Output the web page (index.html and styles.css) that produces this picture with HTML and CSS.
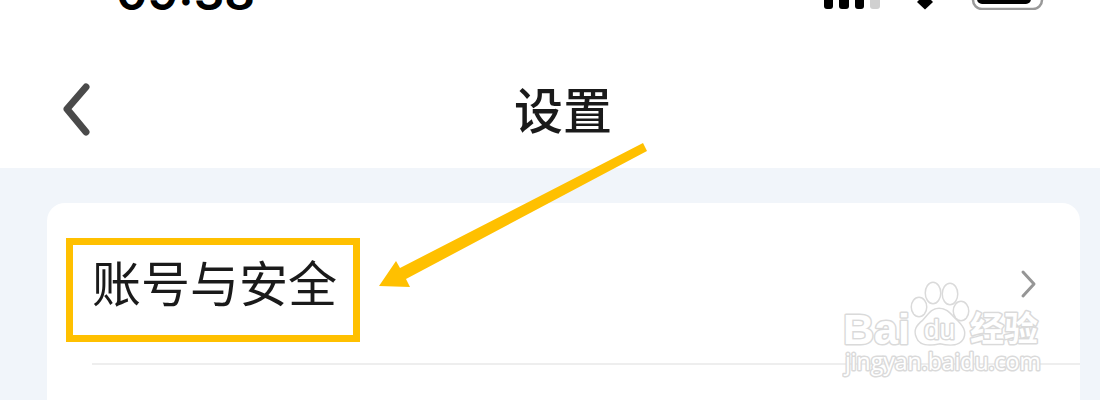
FILE: index.html
```html
<!DOCTYPE html>
<html lang="zh-CN">
<head>
<meta charset="utf-8">
<title>设置</title>
<link rel="stylesheet" href="styles.css">
</head>
<body>
<div class="status">
  <span class="time">09:38</span>
  <svg class="indicators" width="220" height="40" viewBox="0 0 220 40" aria-hidden="true">
    <rect x="0" y="20" width="9" height="19" rx="3"/>
    <rect x="15" y="14" width="10" height="25" rx="3"/>
    <rect x="31" y="8" width="9" height="31" rx="3"/>
    <rect x="46" y="2" width="10" height="37" rx="3" fill="#d0d0d0"/>
    <path d="M95 30 Q101 26 107 30 L109 32 L101 39.500 L93 32Z"/>
    <rect x="149" y="5" width="69" height="34" rx="9" fill="none" stroke="#999" stroke-width="2.500"/>
    <rect x="153" y="9" width="54" height="25" rx="5"/>
  </svg>
</div>
<header class="header">
  <button class="back" aria-label="返回">
    <svg width="32" height="56" viewBox="0 0 32 56"><path d="M26 6 L7 28 L26 51" fill="none" stroke="#4a4a4a" stroke-width="7" stroke-linecap="round" stroke-linejoin="round"/></svg>
  </button>
  <h1 class="title">设置</h1>
</header>
<main class="content">
  <section class="card">
    <a class="row" href="#account">
      <span class="label">账号与安全</span>
      <svg class="chevron" width="20" height="32" viewBox="0 0 20 32" aria-hidden="true"><path d="M4 4 L15 16 L4 28" fill="none" stroke="#969696" stroke-width="3" stroke-linecap="round" stroke-linejoin="round"/></svg>
    </a>
  </section>
</main>
<svg class="arrow" width="272" height="148" viewBox="0 0 272 148" aria-hidden="true">
  <path d="M1 146 L18 121 L22 128 L265 3 L269 11 L28 139 L32 147Z" fill="#ffc000"/>
</svg>
<svg class="watermark" width="204" height="100" viewBox="0 0 204 100" role="img" aria-label="Baidu 经验">
  <g class="outline">
    <text class="brand" x="1" y="64">Bai</text>
    <ellipse cx="77" cy="27" rx="7" ry="9"/>
    <ellipse cx="91" cy="13" rx="7" ry="10"/>
    <ellipse cx="108" cy="14" rx="7" ry="10"/>
    <ellipse cx="119" cy="31" rx="7" ry="9"/>
    <path d="M97 29 C89 29 86 36 81 41 C75 46 72 50 75 57 C78 66 89 65 98 63 C107 65 117 66 121 58 C124 51 120 46 115 41 C109 36 106 29 97 29Z"/>
    <text class="du" x="82" y="59">du</text>
    <text class="product" x="128" y="61">经验</text>
    <text class="site" x="3" y="90">jingyan.baidu.com</text>
  </g>
</svg>
</body>
</html>
```
FILE: styles.css
```css
* {
  box-sizing: border-box;
}

body {
  margin: 0;
  min-height: 100vh;
  display: flex;
  flex-direction: column;
  position: relative;
  overflow: hidden;
  background: #fff;
  color: #1a1a1a;
  font-family: "Liberation Sans", "Noto Sans CJK SC", sans-serif;
}

.status {
  height: 52px;
  padding: 0 56px 0 116px;
  display: flex;
  justify-content: space-between;
  align-items: flex-start;
}

.time {
  margin-top: -37px;
  color: #000;
  font: 600 48px/60px Inter, sans-serif;
}

.indicators {
  margin-top: -30px;
}

.header {
  height: 116px;
  padding: 0 34px 4px 60px;
  display: grid;
  grid-template-columns: 1fr auto 1fr;
  align-items: center;
}

.back {
  justify-self: start;
  display: flex;
  padding: 2px 0 0;
  border: 0;
  background: none;
}

.title {
  margin: 0;
  font: 500 49px/72px "Noto Sans CJK SC", sans-serif;
}

.content {
  flex: 1;
  display: flex;
  padding: 35px 20px 0 47px;
  background: #f1f5fa;
}

.card {
  flex: 1;
  background: #fff;
  border-radius: 18px 18px 0 0;
}

.row {
  position: relative;
  display: flex;
  justify-content: space-between;
  align-items: flex-start;
  padding: 35px 41px 23px 19px;
  color: inherit;
  text-decoration: none;
}

.row::after {
  content: "";
  position: absolute;
  left: 45px;
  right: 0;
  bottom: 0;
  height: 2px;
  background: #eee;
}

.label {
  padding: 0 16px 18px 19px;
  border: 7px solid #ffc000;
  font: 400 49px/72px "Noto Sans CJK SC", sans-serif;
}

.chevron {
  margin-top: 30px;
}

.arrow {
  position: absolute;
  left: 378px;
  top: 140px;
}

.watermark {
  position: absolute;
  right: 54px;
  top: 280px;
}

.outline {
  fill: #fff;
  stroke: #dadada;
  stroke-width: 3px;
  stroke-linejoin: round;
  paint-order: stroke;
}

.brand {
  font: 700 43px "Liberation Sans", sans-serif;
}

.du {
  font: 400 28px "Liberation Sans", sans-serif;
}

.product {
  font: 700 34px "Noto Sans CJK SC", sans-serif;
}

.site {
  font: 400 23px "Open Sans", sans-serif;
}
```
